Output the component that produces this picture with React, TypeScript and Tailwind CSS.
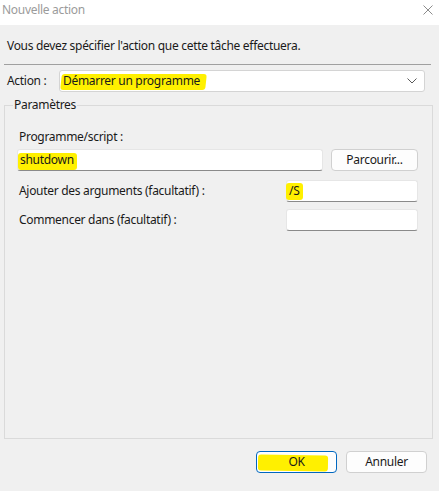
import * as React from 'react';

function Hl({ children, className = '' }: { children: React.ReactNode; className?: string }) {
  // yellow marker stroke behind text
  return (
    <span className="relative inline-block">
      <span className={`absolute bg-[#fff000] rounded-[3px] ${className}`} />
      <span className="relative">{children}</span>
    </span>
  );
}

function TextBox({ className = '', children }: { className?: string; children?: React.ReactNode }) {
  return (
    <div
      className={`h-[22px] bg-white border border-[#e6e6e6] border-b-[#8a8a8a] rounded-[3px] flex items-center pl-[2px] ${className}`}
    >
      {children}
    </div>
  );
}

function Button({ children, primary }: { children: React.ReactNode; primary?: boolean }) {
  return (
    <button
      className={`w-[81px] h-[22px] bg-[#fdfdfd] rounded-[4px] flex items-center justify-center text-[#1a1a1a] ${
        primary ? 'border border-[#0067c0] shadow-[inset_0_0_0_1px_#ffffff]' : 'border border-[#d0d0d0]'
      }`}
    >
      {children}
    </button>
  );
}

export default function App() {
  return (
    <div
      className="w-[439px] h-[491px] bg-[#f0f0f0] flex flex-col text-[12px] leading-[16px] tracking-[-0.3px] text-[#1a1a1a]"
      style={{ fontFamily: '"Noto Sans", "Liberation Sans", sans-serif' }}
    >
      {/* Title bar */}
      <div className="h-[25px] bg-white flex items-start justify-between pt-[2px] pl-[2px] pr-[6px] shrink-0">
        <span className="text-[#9b9b9b]">Nouvelle action</span>
        <svg width="10" height="10" viewBox="0 0 10 10" className="text-[#8c8c8c] mt-[3px]">
          <path d="M0.5 0.5 L9.5 9.5 M9.5 0.5 L0.5 9.5" stroke="currentColor" strokeWidth="1" />
        </svg>
      </div>

      <div className="pt-[13px] px-[7px]">Vous devez spécifier l'action que cette tâche effectuera.</div>
      <div className="ml-[4px] mt-[10px] mr-[8px] h-px bg-[#a0a0a0]" />

      {/* Action row */}
      <div className="flex items-center mt-[5px] pl-[7px] pr-[14px]">
        <span className="w-[52px]">Action :</span>
        <div className="flex-1 h-[22px] bg-white border border-[#d4d4d4] rounded-[3px] flex items-center justify-between pl-[3px] pr-[7px]">
          <Hl className="-left-[2px] -right-[6px] top-[1px] bottom-[-1px] -skew-x-6">Démarrer un programme</Hl>
          <svg width="10" height="6" viewBox="0 0 10 6">
            <path d="M0.5 0.5 L5 5 L9.5 0.5" fill="none" stroke="#5a5a5a" strokeWidth="1" />
          </svg>
        </div>
      </div>

      {/* Group box */}
      <div className="relative ml-[4px] mr-[6px] mt-[13px] border border-[#dadada] flex-1 pt-[23px] pl-[12px] pr-[14px]">
        <span className="absolute left-[8px] -top-[9px] px-[1px] bg-[#f0f0f0]">Paramètres</span>

        <div className="pl-[2px]">Programme/script :</div>
        <div className="flex items-center gap-[8px] mt-[4px]">
          <TextBox className="flex-1">
            <Hl className="-left-[2px] -right-[3px] top-[1px] bottom-[-2px]">shutdown</Hl>
          </TextBox>
          <button className="w-[87px] h-[22px] bg-[#fdfdfd] border border-[#d0d0d0] rounded-[4px] flex items-center justify-center">
            Parcourir...
          </button>
        </div>

        <div className="flex items-center justify-between mt-[9px]">
          <span className="pl-[2px]">Ajouter des arguments (facultatif) :</span>
          <TextBox className="w-[132px]">
            <Hl className="-left-[3px] -right-[4px] top-[0px] bottom-[-1px]">/S</Hl>
          </TextBox>
        </div>

        <div className="flex items-center justify-between mt-[7px]">
          <span className="pl-[2px]">Commencer dans (facultatif) :</span>
          <TextBox className="w-[132px]" />
        </div>
      </div>

      {/* Buttons */}
      <div className="flex justify-end gap-[9px] pr-[12px] mt-[12px] mb-[18px]">
        <Button primary>
          <Hl className="-left-[30px] -right-[24px] top-[1px] bottom-[-1px] rotate-1">OK</Hl>
        </Button>
        <Button>Annuler</Button>
      </div>
    </div>
  );
}
